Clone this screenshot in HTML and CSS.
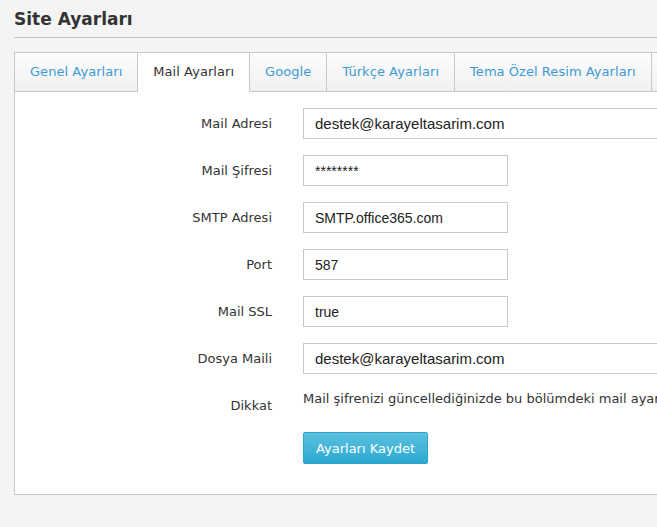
FILE: index.html
```html
<!DOCTYPE html>
<html>

<head>
    <title>Site Ayarları</title>
    <meta charset="utf-8">
    <meta name="viewport" content="width=device-width, initial-scale=1">
    <link rel="stylesheet" href="styles.css">
</head>

<body>
    <div class="page">
        <h1 class="page-title">Site Ayarları</h1>

        <div class="tabs">
            <ul class="tab-list">
                <li class="tab">Genel Ayarları</li>
                <li class="tab active">Mail Ayarları</li>
                <li class="tab">Google</li>
                <li class="tab">Türkçe Ayarları</li>
                <li class="tab">Tema Özel Resim Ayarları</li>
                <li class="tab">Diğer Ayarlar</li>
            </ul>

            <div class="tab-content">
                <form class="settings-form">
                    <div class="form-row">
                        <label class="form-label">Mail Adresi</label>
                        <input class="form-input wide" type="text" value="destek@karayeltasarim.com">
                    </div>
                    <div class="form-row">
                        <label class="form-label">Mail Şifresi</label>
                        <input class="form-input" type="text" value="********">
                    </div>
                    <div class="form-row">
                        <label class="form-label">SMTP Adresi</label>
                        <input class="form-input" type="text" value="SMTP.office365.com">
                    </div>
                    <div class="form-row">
                        <label class="form-label">Port</label>
                        <input class="form-input" type="text" value="587">
                    </div>
                    <div class="form-row">
                        <label class="form-label">Mail SSL</label>
                        <input class="form-input" type="text" value="true">
                    </div>
                    <div class="form-row">
                        <label class="form-label">Dosya Maili</label>
                        <input class="form-input wide" type="text" value="destek@karayeltasarim.com">
                    </div>
                    <div class="form-row">
                        <label class="form-label">Dikkat</label>
                        <p class="form-note">Mail şifrenizi güncellediğinizde bu bölümdeki mail ayarlarını da güncellemeyi unutmayın.</p>
                    </div>
                    <div class="form-row actions">
                        <span></span>
                        <div>
                            <button class="btn-save" type="button">Ayarları Kaydet</button>
                        </div>
                    </div>
                </form>
            </div>
        </div>
    </div>
</body>

</html>
```

FILE: styles.css
```css
html,
body {
    overflow: hidden;
}

body {
    margin: 0;
    font-family: "DejaVu Sans", Verdana, sans-serif;
    font-size: 13px;
    color: #333;
    background: #f4f4f4;
}

.page {
    padding: 9px 0 0 14px;
    width: 900px;
}

.page-title {
    margin: 0;
    padding-bottom: 8px;
    font-size: 17px;
    font-weight: bold;
    color: #333;
    border-bottom: 1px solid #c4c4c4;
    line-height: 20px;
}

.tabs {
    margin-top: 14px;
    border-left: 1px solid #c8c8c8;
    border-bottom: 1px solid #c8c8c8;
    background: white;
}

.tab-list {
    display: flex;
    margin: 0;
    padding: 0;
    list-style: none;
    background: #f4f4f4;
}

.tab {
    padding: 0 15px;
    height: 38px;
    line-height: 38px;
    color: #3d9ad6;
    letter-spacing: 0.05px;
    white-space: nowrap;
    background: linear-gradient(#fdfdfd, #f0f0f0);
    border-top: 1px solid #c8c8c8;
    border-right: 1px solid #c8c8c8;
    border-bottom: 1px solid #c8c8c8;
}

.tab.active {
    color: #333;
    background: white;
    border-bottom-color: white;
}

.tab-content {
    padding: 16px 0 30px;
}

.settings-form {
    display: flex;
    flex-direction: column;
    gap: 16px;
}

.form-row {
    display: grid;
    grid-template-columns: 257px 1fr;
    gap: 31px;
    align-items: start;
}

.form-row.actions {
    margin-top: 2px;
}

.form-label {
    text-align: right;
    padding-top: 7px;
    line-height: 17px;
}

.form-input {
    box-sizing: border-box;
    width: 205px;
    height: 31px;
    padding: 0 11px;
    border: 1px solid #c8c8c8;
    border-radius: 0;
    font-family: "Liberation Sans", Arial, sans-serif;
    font-size: 14px;
    color: #222;
    background: white;
}

.form-input.wide {
    width: 420px;
    font-size: 15px;
}

.form-note {
    margin: 0;
    line-height: 17px;
    white-space: nowrap;
}

.btn-save {
    width: 125px;
    height: 32px;
    padding: 0;
    font-family: "DejaVu Sans", Verdana, sans-serif;
    font-size: 13px;
    color: white;
    background: linear-gradient(#5cc1de, #2ba9d2);
    border: 1px solid #2ca3cc;
    border-radius: 2px;
    cursor: pointer;
}
```
